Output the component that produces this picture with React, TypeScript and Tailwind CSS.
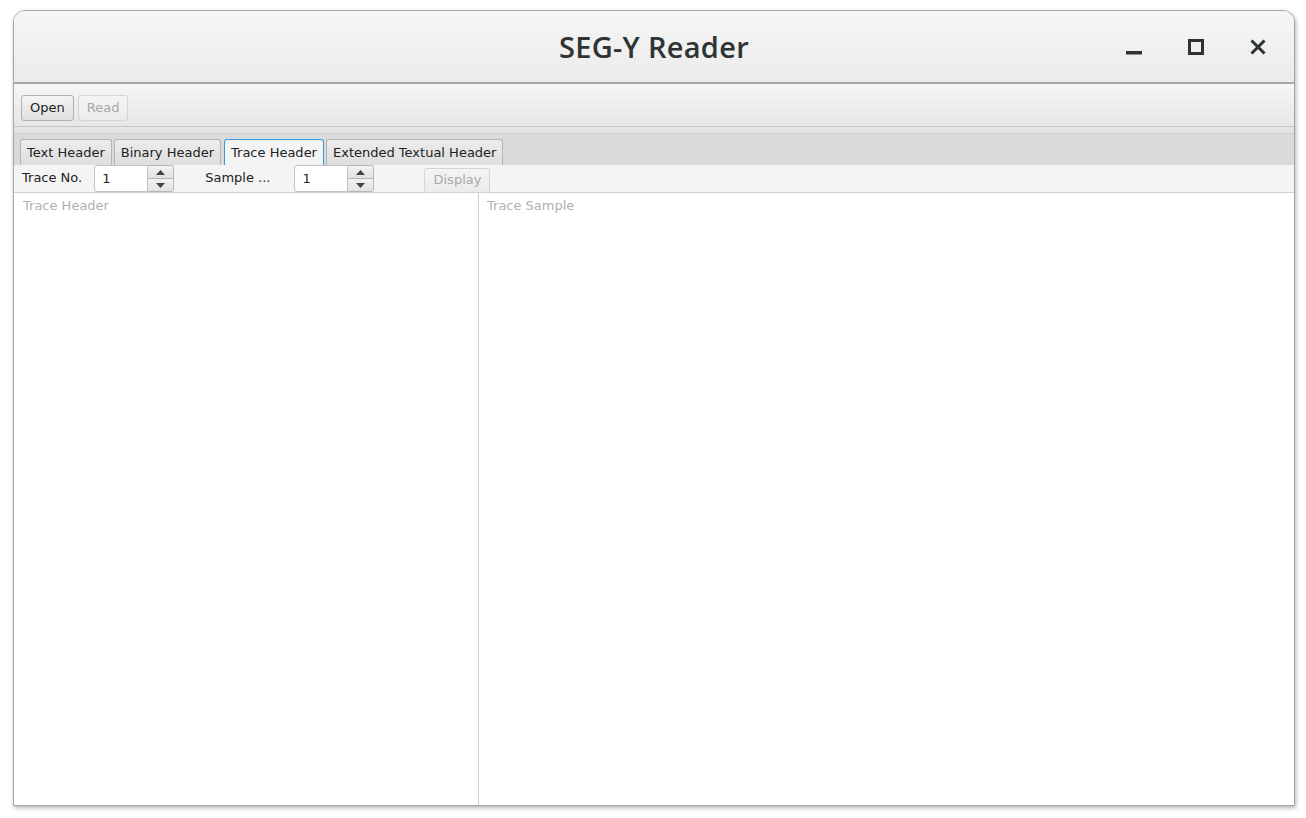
const UI_FONT = { fontFamily: '"DejaVu Sans", sans-serif' };

const TABS = ['Text Header', 'Binary Header', 'Trace Header', 'Extended Textual Header'];

function Spinner({ value }: { value: string }) {
  return (
    <div className="flex h-[27px]">
      <div className="w-[54px] h-full bg-white border border-[#c2c2c2] rounded-l-[3px] flex items-center pl-[7px] text-[13px] text-[#222]">
        {value}
      </div>
      <div className="w-[26px] h-full flex flex-col border border-l-0 border-[#b5b5b5] rounded-r-[3px] overflow-hidden">
        <div className="flex-1 bg-gradient-to-b from-[#f2f2f2] to-[#e2e2e2] border-b border-[#b5b5b5] flex items-center justify-center">
          <svg width="9" height="5" viewBox="0 0 9 5"><path d="M0 5 L4.5 0 L9 5 Z" fill="#444" /></svg>
        </div>
        <div className="flex-1 bg-gradient-to-b from-[#f2f2f2] to-[#e2e2e2] flex items-center justify-center">
          <svg width="9" height="5" viewBox="0 0 9 5"><path d="M0 0 L4.5 5 L9 0 Z" fill="#444" /></svg>
        </div>
      </div>
    </div>
  );
}

export default function App() {
  return (
    <div className="w-[1306px] h-[818px] bg-white pt-[10px] pl-[13px]">
      <div className="w-[1282px] h-[796px] flex flex-col rounded-t-[12px] border border-[#a6a6a6] shadow-[1px_2px_4px_rgba(0,0,0,0.3)] overflow-hidden bg-white">
        {/* Title bar */}
        <div className="relative h-[73px] shrink-0 bg-gradient-to-b from-[#f6f6f6] to-[#ebebeb] border-b-2 border-[#a9a9a9] flex items-center justify-center">
          <span className="text-[29px] font-semibold text-[#2e3436] tracking-[0.3px]" style={{ fontFamily: '"Open Sans", sans-serif' }}>
            SEG-Y Reader
          </span>
          <div className="absolute right-[28px] top-0 h-full flex items-center gap-[46px]">
            <svg width="16" height="16" viewBox="0 0 16 16"><rect x="0" y="12" width="16" height="3.5" fill="#2e3436" /></svg>
            <svg width="16" height="16" viewBox="0 0 16 16"><rect x="1.5" y="1.5" width="13" height="13" fill="none" stroke="#2e3436" strokeWidth="3" /></svg>
            <svg width="16" height="16" viewBox="0 0 16 16"><path d="M1.5 1.5 L14.5 14.5 M14.5 1.5 L1.5 14.5" stroke="#2e3436" strokeWidth="3" /></svg>
          </div>
        </div>

        {/* Toolbar */}
        <div style={UI_FONT} className="h-[43px] shrink-0 bg-gradient-to-b from-[#f6f6f6] to-[#e6e6e6] border-b border-[#c6c6c6] flex items-start gap-[4px] pl-[7px] pt-[11px]">
          <button className="h-[26px] px-[8px] rounded-[3px] border border-[#b0b0b0] bg-gradient-to-b from-[#f4f4f4] to-[#e0e0e0] text-[13px] text-[#222]">Open</button>
          <button className="h-[26px] px-[8px] rounded-[3px] border border-[#d4d4d4] bg-gradient-to-b from-[#f4f4f4] to-[#ebebeb] text-[13px] text-[#a8a8a8]">Read</button>
        </div>

        {/* Tab header area */}
        <div style={UI_FONT} className="h-[38px] shrink-0 bg-[#e4e4e4] pt-[6px]">
          <div className="h-full bg-[#dadada] border-t border-[#cfcfcf] flex items-end pl-[6px] gap-[2px]">
            {TABS.map(t => {
              const active = t === 'Trace Header';
              return (
                <div
                  key={t}
                  className={`h-[26px] px-[6px] flex items-center text-[13px] text-[#222] rounded-t-[3px] border border-b-0 ${
                    active ? 'bg-[#f4f4f4] border-[#3a9ad9] ml-[1px]' : 'bg-gradient-to-b from-[#ececec] to-[#dedede] border-[#b5b5b5]'
                  }`}
                >
                  {t}
                </div>
              );
            })}
          </div>
        </div>

        {/* Controls row */}
        <div style={UI_FONT} className="h-[28px] shrink-0 bg-[#f4f4f4] border-b border-[#d0d0d0] flex items-center text-[13px] text-[#222]">
          <span className="ml-[8px] mb-[2px]">Trace No.</span>
          <div className="ml-[12px]"><Spinner value="1" /></div>
          <span className="ml-[31px] mb-[2px]">Sample ...</span>
          <div className="ml-[24px]"><Spinner value="1" /></div>
          <button className="ml-[50px] mt-[3px] h-[25px] px-[8px] rounded-[3px] border border-[#d4d4d4] bg-gradient-to-b from-[#f4f4f4] to-[#ebebeb] text-[13px] text-[#a8a8a8]">Display</button>
        </div>

        {/* Content panes */}
        <div style={UI_FONT} className="flex-1 flex text-[13px] text-[#b0b0b0]">
          <div className="w-[465px] border-r border-[#cfcfcf] pl-[9px] pt-[3px]">Trace Header</div>
          <div className="flex-1 pl-[8px] pt-[3px]">Trace Sample</div>
        </div>
      </div>
    </div>
  );
}
